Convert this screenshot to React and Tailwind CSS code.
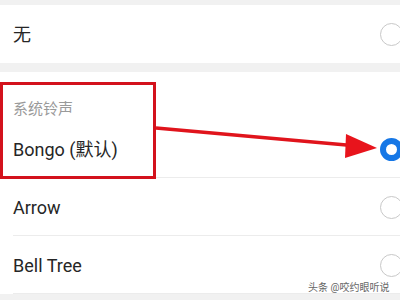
import { Fragment } from 'react';

const font = { fontFamily: 'Roboto, "Noto Sans", "Noto Sans CJK SC", sans-serif' };

function Radio({ checked }) {
    if (checked) {
        return <div className="h-[23px] w-[23px] shrink-0 rounded-full border-[6px] border-[#1677e6] bg-white" />;
    }
    return <div className="h-[23px] w-[23px] shrink-0 rounded-full border-[1.5px] border-[#c8c8c8] bg-white" />;
}

function Row({ label, checked, divider = true }) {
    return (
        <div className="flex h-[58px] items-center pl-[13px]">
            <div className={`flex h-full flex-1 items-center justify-between pt-[2px] ${divider ? 'border-b border-[#ececec]' : ''}`}>
                <span className="text-[18px] text-[#262626]">{label}</span>
                <div className="mr-[-3px]">
                    <Radio checked={checked} />
                </div>
            </div>
        </div>
    );
}

export default function App() {
    const rings = ['Arrow', 'Bell Tree'];
    return (
        <div className="relative h-[300px] w-[400px] overflow-hidden bg-[#f1f1f1]" style={font}>
            <div className="h-[5px]" />
            {/* 无 */}
            <div className="flex h-[58px] items-center justify-between bg-white pl-[13px]">
                <span className="text-[18px] text-[#262626]">无</span>
                <div className="mr-[-3px]">
                    <Radio />
                </div>
            </div>
            <div className="h-[9px]" />

            {/* 系统铃声 */}
            <div className="bg-white">
                <div className="flex h-[48px] items-end pl-[13px]">
                    <span className="text-[15px] text-[#9a9a9a]">系统铃声</span>
                </div>
                <Row label="Bongo (默认)" checked />
                {rings.map((r) => (
                    <Fragment key={r}>
                        <Row label={r} />
                    </Fragment>
                ))}
            </div>

            {/* annotation */}
            <div className="absolute left-0 top-[82px] h-[97px] w-[156px] border-[3px] border-[#d3121c]" />
            <svg className="absolute left-0 top-0" width="400" height="300" viewBox="0 0 400 300">
                <line x1="156" y1="128" x2="352" y2="145.5" stroke="#e0141c" strokeWidth="3.5" />
                <polygon points="346,134 377,148 345,158" fill="#e8141c" />
            </svg>

            {/* watermark */}
            <div className="absolute left-[308px] top-[280px] whitespace-nowrap text-[10px] text-[#666]" style={{ textShadow: '0 0 1px #fff' }}>
                头条 @咬约眼听说
            </div>
        </div>
    );
}
